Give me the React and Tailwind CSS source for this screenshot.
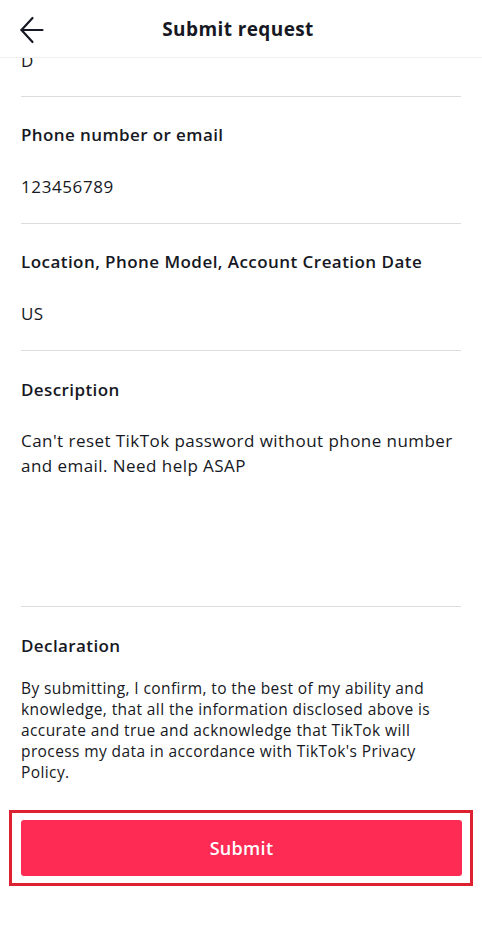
export default function App() {
  const font = { fontFamily: '"Open Sans", "Noto Sans", sans-serif' };
  return (
    <div className="w-[482px] h-[933px] bg-white text-[#161823] overflow-hidden" style={font}>
      <header className="h-[58px] pt-[2px] grid grid-cols-[54px_1fr_60px] items-center border-b border-[#f0f0f0]">
        <div className="pl-[20px] flex items-center">
          <svg width="24" height="28" viewBox="0 0 24 28" fill="none" stroke="#161823" strokeWidth="2.2" strokeLinecap="round" strokeLinejoin="round">
            <path d="M1.5 14H22.5" />
            <path d="M12.5 2L1.5 14l11 12" />
          </svg>
        </div>
        <h1 className="text-center text-[19px] font-bold leading-none tracking-[0.4px]">Submit request</h1>
        <div />
      </header>
      <div className="px-[21px]">
        <div className="h-[39px] overflow-hidden border-b border-[#dcdcdc]">
          <div className="-mt-[9px] text-[17px] leading-[24px]">D</div>
        </div>
        <section className="pt-[26px] pb-[24px] border-b border-[#dcdcdc]">
          <div className="text-[17px] font-semibold leading-[24px] tracking-[0.4px]">Phone number or email</div>
          <div className="mt-[28px] text-[17px] leading-[24px] tracking-[0.6px]">123456789</div>
        </section>
        <section className="pt-[26px] pb-[24px] border-b border-[#dcdcdc]">
          <div className="text-[17px] font-semibold leading-[24px] tracking-[0.45px]">Location, Phone Model, Account Creation Date</div>
          <div className="mt-[28px] text-[17px] leading-[24px] tracking-[0.45px]">US</div>
        </section>
        <section className="pt-[27px] border-b border-[#dcdcdc] min-h-[256px]">
          <div className="text-[17px] font-semibold leading-[24px] tracking-[0.4px]">Description</div>
          <div className="mt-[26px] text-[17px] leading-[25px] tracking-[0.45px]">
            Can't reset TikTok password without phone number and email. Need help ASAP
          </div>
        </section>
        <section className="pt-[27px]">
          <div className="text-[17px] font-semibold leading-[24px] tracking-[0.4px]">Declaration</div>
          <p className="mt-[20px] text-[15.5px] leading-[21px] tracking-[0.4px]">
            By submitting, I confirm, to the best of my ability and knowledge, that all the information disclosed above is accurate and true and acknowledge that TikTok will process my data in accordance with TikTok's Privacy Policy.
          </p>
        </section>
      </div>
      <div className="mt-[27px] mx-[9px] border-[3px] border-[#dd2130] pl-[9px] pr-[8px] py-[7px]">
        <button className="w-full h-[56px] rounded-[3px] bg-[#fe2c55] text-white text-[18px] font-semibold tracking-[0.3px]">
          Submit
        </button>
      </div>
    </div>
  );
}
